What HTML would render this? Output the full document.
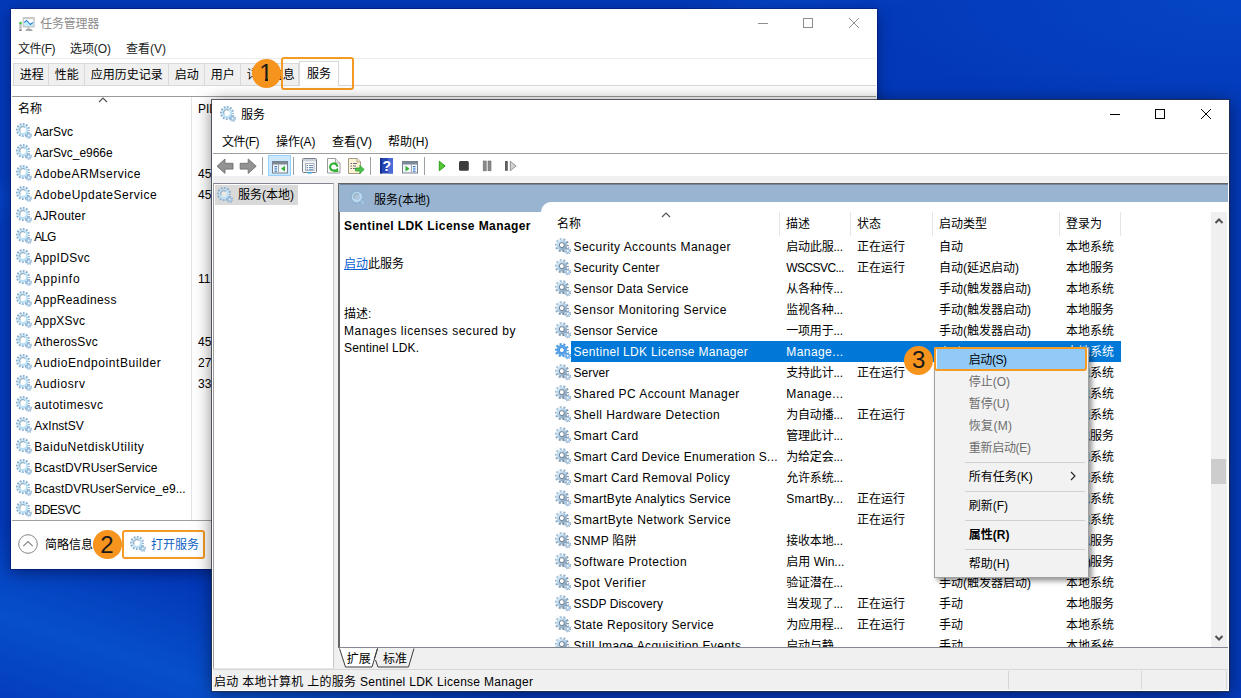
<!DOCTYPE html><html lang="zh-CN"><head><meta charset="utf-8"><title>服务</title><style>
html,body{margin:0;padding:0}
body{width:1241px;height:698px;overflow:hidden;position:relative;font:12px/21px "Liberation Sans","Noto Sans CJK SC",sans-serif;color:#000;background:#0339b9;}
.a{position:absolute}.t{position:absolute;white-space:pre;height:21px;line-height:21px}
.bg{position:absolute;left:0;top:0;width:1241px;height:698px;background:linear-gradient(198.7deg,rgba(8,88,210,0) 84%,rgba(8,88,210,.7) 92.5%,rgba(6,70,200,.3) 100%),radial-gradient(ellipse 380px 120px at 1241px 0px,rgba(8,84,212,.45),rgba(8,84,212,0)),linear-gradient(166deg,rgba(8,84,212,0) 17.5%,rgba(8,84,212,.28) 19.5%,rgba(8,84,212,0) 23%),#0339b9}
</style></head><body><div class="bg"></div>
<svg class="a" width="0" height="0" style="left:0;top:0"><defs><linearGradient id="gg" x1="0" y1="0" x2="1" y2="1"><stop offset="0" stop-color="#dbf1fc"/><stop offset=".45" stop-color="#b4d2e8"/><stop offset="1" stop-color="#748ba1"/></linearGradient><linearGradient id="gt" x1="0" y1="0" x2="1" y2="1"><stop offset="0" stop-color="#b4cee2"/><stop offset=".5" stop-color="#8ea9c1"/><stop offset="1" stop-color="#667b91"/></linearGradient></defs></svg>
<div class="a" style="left:11px;top:9px;width:866px;height:560px;background:#fff;box-shadow:0 0 0 1px rgba(0,20,90,.45),0 4px 14px rgba(0,0,40,.45)"></div>
<svg class="a" style="left:14px;top:12px" width="24" height="22" viewBox="14 12 24 22"><rect x="19.200" y="21.500" width="2.500" height="9.400" rx=".8" fill="#c4c4c4"/><rect x="19.200" y="29.800" width="2.500" height="1.100" fill="#7a7a7a"/><rect x="19.400" y="22.300" width="2.100" height="1.900" rx=".6" fill="#1fd11f"/><rect x="22.600" y="17.100" width="12.200" height="10.400" rx=".8" fill="#c9c9c9"/><rect x="23.900" y="19.100" width="9.300" height="6.800" fill="#fff"/><path d="M23.900 22.500l2.700-2.100 3.800 4.100 2.800-2.300v3.700h-9.300z" fill="#c5ecfb"/><path d="M24.100 22.400l2.500-2 3.800 4.100 2.500-2.200" fill="none" stroke="#1a80d2" stroke-width="1.100"/><rect x="27.600" y="27.500" width="2" height="1.600" fill="#b0b0b0"/><path d="M25.200 30.900l1.300-1.900h5l1.300 1.900z" fill="#a8a8a8"/></svg>
<span class="t" style="left:40.3px;top:14px;color:#8c8c8c;letter-spacing:-0.254px;">任务管理器</span>
<svg class="a" style="left:750px;top:10px" width="126" height="28" viewBox="0 0 126 28" fill="none" stroke="#8e8e8e" stroke-width="1"><path d="M8 13.5h10"/><rect x="53.5" y="8.5" width="9" height="9"/><path d="M99 8l10 10M109 8l-10 10"/></svg>
<span class="t" style="left:18px;top:39px;color:#222;letter-spacing:-0.457px;">文件(F)</span>
<span class="t" style="left:70px;top:39px;color:#222;letter-spacing:-0.082px;">选项(O)</span>
<span class="t" style="left:126px;top:39px;color:#222;">查看(V)</span>
<div class="a" style="left:12px;top:57.6px;width:864px;height:1px;background:#ececec"></div>
<div class="a" style="left:12px;top:85px;width:864px;height:1px;background:#d9d9d9"></div>
<div class="a" style="left:13px;top:63px;width:36px;height:22px;background:#f0f0f0;border:1px solid #d9d9d9;border-bottom:none;box-sizing:border-box"></div>
<span class="t" style="left:19.8px;top:65px;">进程</span>
<div class="a" style="left:48px;top:63px;width:37px;height:22px;background:#f0f0f0;border:1px solid #d9d9d9;border-bottom:none;box-sizing:border-box"></div>
<span class="t" style="left:54.8px;top:65px;">性能</span>
<div class="a" style="left:84px;top:63px;width:85px;height:22px;background:#f0f0f0;border:1px solid #d9d9d9;border-bottom:none;box-sizing:border-box"></div>
<span class="t" style="left:90.8px;top:65px;">应用历史记录</span>
<div class="a" style="left:168px;top:63px;width:37px;height:22px;background:#f0f0f0;border:1px solid #d9d9d9;border-bottom:none;box-sizing:border-box"></div>
<span class="t" style="left:174.8px;top:65px;">启动</span>
<div class="a" style="left:204px;top:63px;width:37px;height:22px;background:#f0f0f0;border:1px solid #d9d9d9;border-bottom:none;box-sizing:border-box"></div>
<span class="t" style="left:210.8px;top:65px;">用户</span>
<div class="a" style="left:240px;top:63px;width:59px;height:22px;background:#f0f0f0;border:1px solid #d9d9d9;border-bottom:none;box-sizing:border-box"></div>
<span class="t" style="left:246.8px;top:65px;">详细信息</span>
<div class="a" style="left:299px;top:61px;width:40px;height:25px;background:#fff;border:1px solid #d9d9d9;border-bottom:none;box-sizing:border-box"></div>
<span class="t" style="left:307px;top:64px;">服务</span>
<div class="a" style="left:12px;top:96px;width:864px;height:1px;background:#9a9a9a"></div>
<div class="a" style="left:191px;top:97px;width:1px;height:423px;background:#e5e5e5"></div>
<span class="t" style="left:18px;top:99px;">名称</span>
<svg class="a" style="left:98px;top:96.5px" width="10" height="6" viewBox="0 0 10 6"><path d="M1 5l4-4 4 4" fill="none" stroke="#555" stroke-width="1.200"/></svg>
<span class="t" style="left:198px;top:99px;">PID</span>
<svg class="a" style="left:16px;top:123px" width="16" height="16" viewBox="0 0 16 16"><circle cx="7" cy="7" r="5.9" fill="none" stroke="#8aadcf" stroke-width="2.2" stroke-dasharray="1.75 1.339" stroke-dashoffset=".875"/><circle cx="7" cy="7" r="4.1" fill="#fff" stroke="#bde1f4" stroke-width="2.3"/><path d="M4.3 8.300a3 3 0 0 1 4.500-3.900" fill="none" stroke="#6b7680" stroke-opacity=".8" stroke-width=".8"/><circle cx="12.700" cy="12.500" r="2.600" fill="none" stroke="#86abcf" stroke-width="1.500" stroke-dasharray="1.050 .992"/><circle cx="12.700" cy="12.500" r="1.600" fill="#fff" stroke="#9dc2e2" stroke-width="1.400"/></svg>
<span class="t" style="left:34.3px;top:122px;letter-spacing:-0.017px;">AarSvc</span>
<svg class="a" style="left:16px;top:144px" width="16" height="16" viewBox="0 0 16 16"><circle cx="7" cy="7" r="5.9" fill="none" stroke="#8aadcf" stroke-width="2.2" stroke-dasharray="1.75 1.339" stroke-dashoffset=".875"/><circle cx="7" cy="7" r="4.1" fill="#fff" stroke="#bde1f4" stroke-width="2.3"/><path d="M4.3 8.300a3 3 0 0 1 4.500-3.900" fill="none" stroke="#6b7680" stroke-opacity=".8" stroke-width=".8"/><circle cx="12.700" cy="12.500" r="2.600" fill="none" stroke="#86abcf" stroke-width="1.500" stroke-dasharray="1.050 .992"/><circle cx="12.700" cy="12.500" r="1.600" fill="#fff" stroke="#9dc2e2" stroke-width="1.400"/></svg>
<span class="t" style="left:34.3px;top:143px;letter-spacing:-0.030px;">AarSvc_e966e</span>
<svg class="a" style="left:16px;top:165px" width="16" height="16" viewBox="0 0 16 16"><circle cx="7" cy="7" r="5.9" fill="none" stroke="#8aadcf" stroke-width="2.2" stroke-dasharray="1.75 1.339" stroke-dashoffset=".875"/><circle cx="7" cy="7" r="4.1" fill="#fff" stroke="#bde1f4" stroke-width="2.3"/><path d="M4.3 8.300a3 3 0 0 1 4.500-3.900" fill="none" stroke="#6b7680" stroke-opacity=".8" stroke-width=".8"/><circle cx="12.700" cy="12.500" r="2.600" fill="none" stroke="#86abcf" stroke-width="1.500" stroke-dasharray="1.050 .992"/><circle cx="12.700" cy="12.500" r="1.600" fill="#fff" stroke="#9dc2e2" stroke-width="1.400"/></svg>
<span class="t" style="left:34.3px;top:164px;letter-spacing:0.488px;">AdobeARMservice</span>
<span class="t" style="left:198px;top:164px;">45</span>
<svg class="a" style="left:16px;top:186px" width="16" height="16" viewBox="0 0 16 16"><circle cx="7" cy="7" r="5.9" fill="none" stroke="#8aadcf" stroke-width="2.2" stroke-dasharray="1.75 1.339" stroke-dashoffset=".875"/><circle cx="7" cy="7" r="4.1" fill="#fff" stroke="#bde1f4" stroke-width="2.3"/><path d="M4.3 8.300a3 3 0 0 1 4.500-3.900" fill="none" stroke="#6b7680" stroke-opacity=".8" stroke-width=".8"/><circle cx="12.700" cy="12.500" r="2.600" fill="none" stroke="#86abcf" stroke-width="1.500" stroke-dasharray="1.050 .992"/><circle cx="12.700" cy="12.500" r="1.600" fill="#fff" stroke="#9dc2e2" stroke-width="1.400"/></svg>
<span class="t" style="left:34.3px;top:185px;letter-spacing:0.528px;">AdobeUpdateService</span>
<span class="t" style="left:198px;top:185px;">45</span>
<svg class="a" style="left:16px;top:207px" width="16" height="16" viewBox="0 0 16 16"><circle cx="7" cy="7" r="5.9" fill="none" stroke="#8aadcf" stroke-width="2.2" stroke-dasharray="1.75 1.339" stroke-dashoffset=".875"/><circle cx="7" cy="7" r="4.1" fill="#fff" stroke="#bde1f4" stroke-width="2.3"/><path d="M4.3 8.300a3 3 0 0 1 4.500-3.900" fill="none" stroke="#6b7680" stroke-opacity=".8" stroke-width=".8"/><circle cx="12.700" cy="12.500" r="2.600" fill="none" stroke="#86abcf" stroke-width="1.500" stroke-dasharray="1.050 .992"/><circle cx="12.700" cy="12.500" r="1.600" fill="#fff" stroke="#9dc2e2" stroke-width="1.400"/></svg>
<span class="t" style="left:34.3px;top:206px;letter-spacing:0.153px;">AJRouter</span>
<svg class="a" style="left:16px;top:228px" width="16" height="16" viewBox="0 0 16 16"><circle cx="7" cy="7" r="5.9" fill="none" stroke="#8aadcf" stroke-width="2.2" stroke-dasharray="1.75 1.339" stroke-dashoffset=".875"/><circle cx="7" cy="7" r="4.1" fill="#fff" stroke="#bde1f4" stroke-width="2.3"/><path d="M4.3 8.300a3 3 0 0 1 4.500-3.900" fill="none" stroke="#6b7680" stroke-opacity=".8" stroke-width=".8"/><circle cx="12.700" cy="12.500" r="2.600" fill="none" stroke="#86abcf" stroke-width="1.500" stroke-dasharray="1.050 .992"/><circle cx="12.700" cy="12.500" r="1.600" fill="#fff" stroke="#9dc2e2" stroke-width="1.400"/></svg>
<span class="t" style="left:34.3px;top:227px;letter-spacing:-1.008px;">ALG</span>
<svg class="a" style="left:16px;top:249px" width="16" height="16" viewBox="0 0 16 16"><circle cx="7" cy="7" r="5.9" fill="none" stroke="#8aadcf" stroke-width="2.2" stroke-dasharray="1.75 1.339" stroke-dashoffset=".875"/><circle cx="7" cy="7" r="4.1" fill="#fff" stroke="#bde1f4" stroke-width="2.3"/><path d="M4.3 8.300a3 3 0 0 1 4.500-3.900" fill="none" stroke="#6b7680" stroke-opacity=".8" stroke-width=".8"/><circle cx="12.700" cy="12.500" r="2.600" fill="none" stroke="#86abcf" stroke-width="1.500" stroke-dasharray="1.050 .992"/><circle cx="12.700" cy="12.500" r="1.600" fill="#fff" stroke="#9dc2e2" stroke-width="1.400"/></svg>
<span class="t" style="left:34.3px;top:248px;letter-spacing:0.306px;">AppIDSvc</span>
<svg class="a" style="left:16px;top:270px" width="16" height="16" viewBox="0 0 16 16"><circle cx="7" cy="7" r="5.9" fill="none" stroke="#8aadcf" stroke-width="2.2" stroke-dasharray="1.75 1.339" stroke-dashoffset=".875"/><circle cx="7" cy="7" r="4.1" fill="#fff" stroke="#bde1f4" stroke-width="2.3"/><path d="M4.3 8.300a3 3 0 0 1 4.500-3.900" fill="none" stroke="#6b7680" stroke-opacity=".8" stroke-width=".8"/><circle cx="12.700" cy="12.500" r="2.600" fill="none" stroke="#86abcf" stroke-width="1.500" stroke-dasharray="1.050 .992"/><circle cx="12.700" cy="12.500" r="1.600" fill="#fff" stroke="#9dc2e2" stroke-width="1.400"/></svg>
<span class="t" style="left:34.3px;top:269px;letter-spacing:0.766px;">Appinfo</span>
<span class="t" style="left:198px;top:269px;">11</span>
<svg class="a" style="left:16px;top:291px" width="16" height="16" viewBox="0 0 16 16"><circle cx="7" cy="7" r="5.9" fill="none" stroke="#8aadcf" stroke-width="2.2" stroke-dasharray="1.75 1.339" stroke-dashoffset=".875"/><circle cx="7" cy="7" r="4.1" fill="#fff" stroke="#bde1f4" stroke-width="2.3"/><path d="M4.3 8.300a3 3 0 0 1 4.500-3.900" fill="none" stroke="#6b7680" stroke-opacity=".8" stroke-width=".8"/><circle cx="12.700" cy="12.500" r="2.600" fill="none" stroke="#86abcf" stroke-width="1.500" stroke-dasharray="1.050 .992"/><circle cx="12.700" cy="12.500" r="1.600" fill="#fff" stroke="#9dc2e2" stroke-width="1.400"/></svg>
<span class="t" style="left:34.3px;top:290px;letter-spacing:0.376px;">AppReadiness</span>
<svg class="a" style="left:16px;top:312px" width="16" height="16" viewBox="0 0 16 16"><circle cx="7" cy="7" r="5.9" fill="none" stroke="#8aadcf" stroke-width="2.2" stroke-dasharray="1.75 1.339" stroke-dashoffset=".875"/><circle cx="7" cy="7" r="4.1" fill="#fff" stroke="#bde1f4" stroke-width="2.3"/><path d="M4.3 8.300a3 3 0 0 1 4.500-3.900" fill="none" stroke="#6b7680" stroke-opacity=".8" stroke-width=".8"/><circle cx="12.700" cy="12.500" r="2.600" fill="none" stroke="#86abcf" stroke-width="1.500" stroke-dasharray="1.050 .992"/><circle cx="12.700" cy="12.500" r="1.600" fill="#fff" stroke="#9dc2e2" stroke-width="1.400"/></svg>
<span class="t" style="left:34.3px;top:311px;letter-spacing:0.207px;">AppXSvc</span>
<svg class="a" style="left:16px;top:333px" width="16" height="16" viewBox="0 0 16 16"><circle cx="7" cy="7" r="5.9" fill="none" stroke="#8aadcf" stroke-width="2.2" stroke-dasharray="1.75 1.339" stroke-dashoffset=".875"/><circle cx="7" cy="7" r="4.1" fill="#fff" stroke="#bde1f4" stroke-width="2.3"/><path d="M4.3 8.300a3 3 0 0 1 4.500-3.900" fill="none" stroke="#6b7680" stroke-opacity=".8" stroke-width=".8"/><circle cx="12.700" cy="12.500" r="2.600" fill="none" stroke="#86abcf" stroke-width="1.500" stroke-dasharray="1.050 .992"/><circle cx="12.700" cy="12.500" r="1.600" fill="#fff" stroke="#9dc2e2" stroke-width="1.400"/></svg>
<span class="t" style="left:34.3px;top:332px;letter-spacing:0.238px;">AtherosSvc</span>
<span class="t" style="left:198px;top:332px;">45</span>
<svg class="a" style="left:16px;top:354px" width="16" height="16" viewBox="0 0 16 16"><circle cx="7" cy="7" r="5.9" fill="none" stroke="#8aadcf" stroke-width="2.2" stroke-dasharray="1.75 1.339" stroke-dashoffset=".875"/><circle cx="7" cy="7" r="4.1" fill="#fff" stroke="#bde1f4" stroke-width="2.3"/><path d="M4.3 8.300a3 3 0 0 1 4.500-3.900" fill="none" stroke="#6b7680" stroke-opacity=".8" stroke-width=".8"/><circle cx="12.700" cy="12.500" r="2.600" fill="none" stroke="#86abcf" stroke-width="1.500" stroke-dasharray="1.050 .992"/><circle cx="12.700" cy="12.500" r="1.600" fill="#fff" stroke="#9dc2e2" stroke-width="1.400"/></svg>
<span class="t" style="left:34.3px;top:353px;letter-spacing:0.578px;">AudioEndpointBuilder</span>
<span class="t" style="left:198px;top:353px;">27</span>
<svg class="a" style="left:16px;top:375px" width="16" height="16" viewBox="0 0 16 16"><circle cx="7" cy="7" r="5.9" fill="none" stroke="#8aadcf" stroke-width="2.2" stroke-dasharray="1.75 1.339" stroke-dashoffset=".875"/><circle cx="7" cy="7" r="4.1" fill="#fff" stroke="#bde1f4" stroke-width="2.3"/><path d="M4.3 8.300a3 3 0 0 1 4.500-3.900" fill="none" stroke="#6b7680" stroke-opacity=".8" stroke-width=".8"/><circle cx="12.700" cy="12.500" r="2.600" fill="none" stroke="#86abcf" stroke-width="1.500" stroke-dasharray="1.050 .992"/><circle cx="12.700" cy="12.500" r="1.600" fill="#fff" stroke="#9dc2e2" stroke-width="1.400"/></svg>
<span class="t" style="left:34.3px;top:374px;letter-spacing:0.559px;">Audiosrv</span>
<span class="t" style="left:198px;top:374px;">33</span>
<svg class="a" style="left:16px;top:396px" width="16" height="16" viewBox="0 0 16 16"><circle cx="7" cy="7" r="5.9" fill="none" stroke="#8aadcf" stroke-width="2.2" stroke-dasharray="1.75 1.339" stroke-dashoffset=".875"/><circle cx="7" cy="7" r="4.1" fill="#fff" stroke="#bde1f4" stroke-width="2.3"/><path d="M4.3 8.300a3 3 0 0 1 4.500-3.900" fill="none" stroke="#6b7680" stroke-opacity=".8" stroke-width=".8"/><circle cx="12.700" cy="12.500" r="2.600" fill="none" stroke="#86abcf" stroke-width="1.500" stroke-dasharray="1.050 .992"/><circle cx="12.700" cy="12.500" r="1.600" fill="#fff" stroke="#9dc2e2" stroke-width="1.400"/></svg>
<span class="t" style="left:34.3px;top:395px;letter-spacing:0.467px;">autotimesvc</span>
<svg class="a" style="left:16px;top:417px" width="16" height="16" viewBox="0 0 16 16"><circle cx="7" cy="7" r="5.9" fill="none" stroke="#8aadcf" stroke-width="2.2" stroke-dasharray="1.75 1.339" stroke-dashoffset=".875"/><circle cx="7" cy="7" r="4.1" fill="#fff" stroke="#bde1f4" stroke-width="2.3"/><path d="M4.3 8.300a3 3 0 0 1 4.500-3.900" fill="none" stroke="#6b7680" stroke-opacity=".8" stroke-width=".8"/><circle cx="12.700" cy="12.500" r="2.600" fill="none" stroke="#86abcf" stroke-width="1.500" stroke-dasharray="1.050 .992"/><circle cx="12.700" cy="12.500" r="1.600" fill="#fff" stroke="#9dc2e2" stroke-width="1.400"/></svg>
<span class="t" style="left:34.3px;top:416px;">AxInstSV</span>
<svg class="a" style="left:16px;top:438px" width="16" height="16" viewBox="0 0 16 16"><circle cx="7" cy="7" r="5.9" fill="none" stroke="#8aadcf" stroke-width="2.2" stroke-dasharray="1.75 1.339" stroke-dashoffset=".875"/><circle cx="7" cy="7" r="4.1" fill="#fff" stroke="#bde1f4" stroke-width="2.3"/><path d="M4.3 8.300a3 3 0 0 1 4.500-3.900" fill="none" stroke="#6b7680" stroke-opacity=".8" stroke-width=".8"/><circle cx="12.700" cy="12.500" r="2.600" fill="none" stroke="#86abcf" stroke-width="1.500" stroke-dasharray="1.050 .992"/><circle cx="12.700" cy="12.500" r="1.600" fill="#fff" stroke="#9dc2e2" stroke-width="1.400"/></svg>
<span class="t" style="left:34.3px;top:437px;letter-spacing:0.525px;">BaiduNetdiskUtility</span>
<svg class="a" style="left:16px;top:459px" width="16" height="16" viewBox="0 0 16 16"><circle cx="7" cy="7" r="5.9" fill="none" stroke="#8aadcf" stroke-width="2.2" stroke-dasharray="1.75 1.339" stroke-dashoffset=".875"/><circle cx="7" cy="7" r="4.1" fill="#fff" stroke="#bde1f4" stroke-width="2.3"/><path d="M4.3 8.300a3 3 0 0 1 4.500-3.900" fill="none" stroke="#6b7680" stroke-opacity=".8" stroke-width=".8"/><circle cx="12.700" cy="12.500" r="2.600" fill="none" stroke="#86abcf" stroke-width="1.500" stroke-dasharray="1.050 .992"/><circle cx="12.700" cy="12.500" r="1.600" fill="#fff" stroke="#9dc2e2" stroke-width="1.400"/></svg>
<span class="t" style="left:34.3px;top:458px;letter-spacing:0.139px;">BcastDVRUserService</span>
<svg class="a" style="left:16px;top:480px" width="16" height="16" viewBox="0 0 16 16"><circle cx="7" cy="7" r="5.9" fill="none" stroke="#8aadcf" stroke-width="2.2" stroke-dasharray="1.75 1.339" stroke-dashoffset=".875"/><circle cx="7" cy="7" r="4.1" fill="#fff" stroke="#bde1f4" stroke-width="2.3"/><path d="M4.3 8.300a3 3 0 0 1 4.500-3.900" fill="none" stroke="#6b7680" stroke-opacity=".8" stroke-width=".8"/><circle cx="12.700" cy="12.500" r="2.600" fill="none" stroke="#86abcf" stroke-width="1.500" stroke-dasharray="1.050 .992"/><circle cx="12.700" cy="12.500" r="1.600" fill="#fff" stroke="#9dc2e2" stroke-width="1.400"/></svg>
<span class="t" style="left:34.3px;top:479px;letter-spacing:0.028px;">BcastDVRUserService_e9...</span>
<svg class="a" style="left:16px;top:501px" width="16" height="16" viewBox="0 0 16 16"><circle cx="7" cy="7" r="5.9" fill="none" stroke="#8aadcf" stroke-width="2.2" stroke-dasharray="1.75 1.339" stroke-dashoffset=".875"/><circle cx="7" cy="7" r="4.1" fill="#fff" stroke="#bde1f4" stroke-width="2.3"/><path d="M4.3 8.300a3 3 0 0 1 4.500-3.900" fill="none" stroke="#6b7680" stroke-opacity=".8" stroke-width=".8"/><circle cx="12.700" cy="12.500" r="2.600" fill="none" stroke="#86abcf" stroke-width="1.500" stroke-dasharray="1.050 .992"/><circle cx="12.700" cy="12.500" r="1.600" fill="#fff" stroke="#9dc2e2" stroke-width="1.400"/></svg>
<span class="t" style="left:34.3px;top:500px;letter-spacing:-0.552px;">BDESVC</span>
<div class="a" style="left:12px;top:520px;width:864px;height:1px;background:#a0a0a0"></div>
<svg class="a" style="left:17.300px;top:533px" width="22" height="22" viewBox="0 0 22 22" fill="none" stroke="#858585" stroke-width="1"><circle cx="11" cy="11" r="9.300"/><path d="M6.300 13.200l4.700-4.700 4.700 4.700" stroke-width="1.200"/></svg>
<span class="t" style="left:45px;top:535px;color:#000;">简略信息(D)</span>
<svg class="a" style="left:130px;top:536px" width="16" height="16" viewBox="0 0 16 16"><circle cx="7" cy="7" r="5.9" fill="none" stroke="#8aadcf" stroke-width="2.2" stroke-dasharray="1.75 1.339" stroke-dashoffset=".875"/><circle cx="7" cy="7" r="4.1" fill="#fff" stroke="#bde1f4" stroke-width="2.3"/><path d="M4.3 8.300a3 3 0 0 1 4.500-3.900" fill="none" stroke="#6b7680" stroke-opacity=".8" stroke-width=".8"/><circle cx="12.700" cy="12.500" r="2.600" fill="none" stroke="#86abcf" stroke-width="1.500" stroke-dasharray="1.050 .992"/><circle cx="12.700" cy="12.500" r="1.600" fill="#fff" stroke="#9dc2e2" stroke-width="1.400"/></svg>
<span class="t" style="left:151px;top:535px;color:#0f5fc4;">打开服务</span>
<div class="a" style="left:281px;top:57.2px;width:72.5px;height:32.4px;border:2px solid #f59a23;border-radius:3px;box-sizing:border-box"></div>
<div class="a" style="left:251.5px;top:58.5px;width:29px;height:29px;border-radius:50%;background:#f7941d"></div>
<span class="t" style="left:259.33px;top:59px;height:28px;line-height:28px;font-size:24px;color:#1a1a1a;">1</span>
<div class="a" style="left:260px;top:78.4px;width:4.9px;height:3.2px;background:#f7941d"></div>
<div class="a" style="left:268.1px;top:78.4px;width:4.9px;height:3.2px;background:#f7941d"></div>
<div class="a" style="left:122px;top:530px;width:83px;height:29px;border:2px solid #f59a23;border-radius:3px;box-sizing:border-box"></div>
<div class="a" style="left:92.5px;top:530px;width:29px;height:29px;border-radius:50%;background:#f7941d"></div>
<span class="t" style="left:100.33px;top:531px;height:28px;line-height:28px;font-size:24px;color:#1a1a1a;">2</span>
<div class="a" style="left:212px;top:100px;width:1017px;height:591px;background:#fff;box-shadow:0 0 0 1px rgba(40,45,60,.75),0 2px 16px rgba(0,0,0,.5)"></div>
<svg class="a" style="left:220px;top:106px" width="16" height="16" viewBox="0 0 16 16"><circle cx="7" cy="7" r="5.9" fill="none" stroke="#8aadcf" stroke-width="2.2" stroke-dasharray="1.75 1.339" stroke-dashoffset=".875"/><circle cx="7" cy="7" r="4.1" fill="#fff" stroke="#bde1f4" stroke-width="2.3"/><path d="M4.3 8.300a3 3 0 0 1 4.500-3.900" fill="none" stroke="#6b7680" stroke-opacity=".8" stroke-width=".8"/><circle cx="12.700" cy="12.500" r="2.600" fill="none" stroke="#86abcf" stroke-width="1.500" stroke-dasharray="1.050 .992"/><circle cx="12.700" cy="12.500" r="1.600" fill="#fff" stroke="#9dc2e2" stroke-width="1.400"/></svg>
<span class="t" style="left:241px;top:105px;">服务</span>
<svg class="a" style="left:1100px;top:101px" width="128" height="28" viewBox="0 0 128 28" fill="none" stroke="#000" stroke-width="1"><path d="M10 13.5h10"/><rect x="55.5" y="8.5" width="9" height="9"/><path d="M101 8l10 10M111 8l-10 10"/></svg>
<span class="t" style="left:222px;top:132px;letter-spacing:-0.457px;">文件(F)</span>
<span class="t" style="left:276px;top:132px;letter-spacing:-0.125px;">操作(A)</span>
<span class="t" style="left:332px;top:132px;">查看(V)</span>
<span class="t" style="left:388px;top:132px;letter-spacing:-0.043px;">帮助(H)</span>
<div class="a" style="left:213px;top:153px;width:1015px;height:1px;background:#a0a0a0"></div>
<div class="a" style="left:213px;top:176px;width:1015px;height:7px;background:#f0f0f0"></div>
<div class="a" style="left:268px;top:155px;width:23px;height:21px;background:#cce8ff;border:1px solid #99d1ff;box-sizing:border-box"></div>
<div class="a" style="left:262px;top:157px;width:1px;height:18px;background:#a0a0a0"></div>
<div class="a" style="left:293px;top:157px;width:1px;height:18px;background:#a0a0a0"></div>
<div class="a" style="left:370px;top:157px;width:1px;height:18px;background:#a0a0a0"></div>
<div class="a" style="left:424px;top:157px;width:1px;height:18px;background:#a0a0a0"></div>
<svg class="a" style="left:213px;top:154px" width="320" height="23" viewBox="213 154 320 23"><path d="M217 166.200l8-7.200v4.300h8v5.800h-8v4.300z" fill="#939393" stroke="#6f6f6f" stroke-width=".9" stroke-linejoin="round"/><path d="M256.200 166.200l-8-7.200v4.300h-8v5.800h8v4.300z" fill="#939393" stroke="#6f6f6f" stroke-width=".9" stroke-linejoin="round"/><rect x="272.500" y="161.500" width="15" height="11.500" fill="#f4f7fa" stroke="#76828f"/><rect x="273" y="162" width="14" height="2.500" fill="#7c8896"/><path d="M278.500 164.500v8" stroke="#9aa5b1"/><rect x="274.500" y="166" width="2.500" height="1.300" fill="#3f7fd0"/><rect x="274.500" y="168.300" width="2.500" height="1.300" fill="#3f7fd0"/><rect x="274.500" y="170.600" width="2.500" height="1.300" fill="#3f7fd0"/><path d="M285 165.800v5.800l-4-2.900z" fill="#35b035"/><rect x="302.500" y="158.500" width="14" height="14" rx="1" fill="#f4f7fa" stroke="#767d86"/><rect x="303" y="159" width="13" height="2.300" fill="#c9d0d8"/><rect x="305.500" y="163.500" width="8.500" height="7" fill="#fff" stroke="#9aa3ad" stroke-width=".8"/><path d="M306.500 165.500h1.500M309 165.500h4M306.500 167.500h1.500M309 167.500h4M306.500 169.300h1.500M309 169.300h4" stroke="#5d7fae" stroke-width=".9"/><rect x="307.500" y="172" width="4" height="1.500" fill="#2fa8e8"/><path d="M327.500 158.500h8l4.500 4.500v10h-12.500z" fill="#fff" stroke="#9a9a9a"/><path d="M335.500 158.500v4.500h4.500" fill="#e8e8e8" stroke="#9a9a9a" stroke-width=".8"/><path d="M337.300 166.800a3.600 3.600 0 1 0-1.500 3.100" fill="none" stroke="#2fae2f" stroke-width="2.100"/><path d="M334 172.300l4.600-.5-1.100-4.300z" fill="#2fae2f"/><path d="M348.500 158.500h8.500l3.500 3.500v11.500h-12z" fill="#fbf3d3" stroke="#a39b86"/><path d="M357 158.500v3.500h3.500" fill="#efe6c2" stroke="#a39b86" stroke-width=".8"/><path d="M350.500 163.500h1.500M353 163.500h4M350.500 166h1.500M353 166h3M350.500 168.500h1.500M353 168.500h3" stroke="#6f6a8a" stroke-width="1"/><path d="M355.500 168h4.300v-2.600l4.400 4.100-4.400 4.100v-2.600h-4.300z" fill="#4bc24b" stroke="#2c982c" stroke-width=".7"/><rect x="380" y="158" width="13" height="15.500" fill="#2646b4"/><rect x="388" y="158" width="5" height="15.500" fill="#4a6ad8"/><rect x="380" y="158" width="2" height="15.500" fill="#17308f"/><rect x="402.500" y="161.500" width="15" height="11.500" fill="#f4f7fa" stroke="#76828f"/><rect x="403" y="162" width="14" height="2.500" fill="#7c8896"/><path d="M411.500 164.500v8" stroke="#9aa5b1"/><path d="M405.500 165.800v5.800l4-2.900z" fill="#35b035"/><rect x="413" y="166" width="2.500" height="1.300" fill="#3f7fd0"/><rect x="413" y="168.300" width="2.500" height="1.300" fill="#3f7fd0"/><rect x="413" y="170.600" width="2.500" height="1.300" fill="#3f7fd0"/><path d="M439.300 161.200l5.800 4.800-5.800 4.800z" fill="#55c833" stroke="#2e9e1a" stroke-width="1"/><rect x="459" y="161" width="9.800" height="9.800" rx="1.500" fill="#3c3c3c"/><rect x="483.200" y="161" width="3" height="9.800" fill="#8a8a8a" stroke="#6a6a6a" stroke-width=".6"/><rect x="488" y="161" width="3" height="9.800" fill="#8a8a8a" stroke="#6a6a6a" stroke-width=".6"/><rect x="505" y="161" width="2.800" height="9.800" fill="#5f5f5f"/><path d="M510.300 161.300l5.800 4.700-5.800 4.700z" fill="#d2d2d2" stroke="#8a8a8a" stroke-width=".9"/><text x="382.600" y="171" font-family='"Liberation Sans",sans-serif' font-size="14" font-weight="bold" fill="#fff">?</text></svg>
<div class="a" style="left:213px;top:183px;width:1015px;height:486px;background:#f0f0f0"></div>
<div class="a" style="left:213px;top:183px;width:121px;height:486px;background:#fff;border:1px solid #828790;border-right-color:#c8c8c8;border-bottom-color:#e8e8e8;border-left-color:#a0a0a0;box-sizing:border-box"></div>
<div class="a" style="left:215px;top:185px;width:83px;height:20px;background:#d9d9d9"></div>
<svg class="a" style="left:217px;top:187px" width="16" height="16" viewBox="0 0 16 16"><circle cx="7" cy="7" r="5.9" fill="none" stroke="#8aadcf" stroke-width="2.2" stroke-dasharray="1.75 1.339" stroke-dashoffset=".875"/><circle cx="7" cy="7" r="4.1" fill="#e9e9e9" stroke="#bde1f4" stroke-width="2.3"/><path d="M4.3 8.300a3 3 0 0 1 4.500-3.900" fill="none" stroke="#6b7680" stroke-opacity=".8" stroke-width=".8"/><circle cx="12.700" cy="12.500" r="2.600" fill="none" stroke="#86abcf" stroke-width="1.500" stroke-dasharray="1.050 .992"/><circle cx="12.700" cy="12.500" r="1.600" fill="#e9e9e9" stroke="#9dc2e2" stroke-width="1.400"/></svg>
<span class="t" style="left:238px;top:185px;">服务(本地)</span>
<div class="a" style="left:337.5px;top:183px;width:890.5px;height:465px;background:#fff;border:1px solid #646464;border-left-width:2px;border-right:none;box-sizing:border-box"></div>
<div class="a" style="left:339px;top:184px;width:889px;height:28px;background:#99b4d1"></div>
<div class="a" style="left:541px;top:202px;width:687px;height:20px;background:#fff;border-top-left-radius:10px"></div>
<svg class="a" style="left:350px;top:190px;opacity:.85" width="16" height="16" viewBox="0 0 16 16"><circle cx="7" cy="7" r="5.9" fill="none" stroke="#8aadcf" stroke-width="2.2" stroke-dasharray="1.75 1.339" stroke-dashoffset=".875"/><circle cx="7" cy="7" r="4.1" fill="#b3c8df" stroke="#bde1f4" stroke-width="2.3"/><path d="M4.3 8.300a3 3 0 0 1 4.500-3.900" fill="none" stroke="#6b7680" stroke-opacity=".8" stroke-width=".8"/><circle cx="12.700" cy="12.500" r="2.600" fill="none" stroke="#86abcf" stroke-width="1.500" stroke-dasharray="1.050 .992"/><circle cx="12.700" cy="12.500" r="1.600" fill="#b3c8df" stroke="#9dc2e2" stroke-width="1.400"/></svg>
<div class="a" style="left:339.5px;top:184px;width:888.5px;height:1px;background:#77869b"></div>
<span class="t" style="left:374px;top:190px;">服务(本地)</span>
<span class="t" style="left:344px;top:216px;font-weight:bold;letter-spacing:0.411px;">Sentinel LDK License Manager</span>
<span class="t" style="left:344px;top:254px;color:#0b5fd0;text-decoration:underline;">启动</span>
<span class="t" style="left:368px;top:254px;">此服务</span>
<span class="t" style="left:344px;top:304px;">描述:</span>
<span class="t" style="left:344px;top:321px;letter-spacing:0.516px;">Manages licenses secured by</span>
<span class="t" style="left:344px;top:338px;letter-spacing:0.134px;">Sentinel LDK.</span>
<span class="t" style="left:557px;top:214px;">名称</span>
<span class="t" style="left:786px;top:214px;">描述</span>
<span class="t" style="left:857px;top:214px;">状态</span>
<span class="t" style="left:939px;top:214px;">启动类型</span>
<span class="t" style="left:1066px;top:214px;">登录为</span>
<svg class="a" style="left:660.5px;top:211.5px" width="10" height="6" viewBox="0 0 10 6"><path d="M1 5l4-4 4 4" fill="none" stroke="#555" stroke-width="1.200"/></svg>
<div class="a" style="left:779px;top:212px;width:1px;height:24px;background:#e5e5e5"></div>
<div class="a" style="left:850px;top:212px;width:1px;height:24px;background:#e5e5e5"></div>
<div class="a" style="left:932px;top:212px;width:1px;height:24px;background:#e5e5e5"></div>
<div class="a" style="left:1059px;top:212px;width:1px;height:24px;background:#e5e5e5"></div>
<div class="a" style="left:1120px;top:212px;width:1px;height:24px;background:#e5e5e5"></div>
<div class="a" style="left:339px;top:235px;width:871px;height:412px;overflow:hidden">
<svg class="a" style="left:216px;top:3px" width="17" height="17" viewBox="0 0 17 17"><circle cx="6.800" cy="7.100" r="5.900" fill="none" stroke="url(#gt)" stroke-width="2.300" stroke-dasharray="2.050 1.657" stroke-dashoffset="1.025"/><circle cx="6.800" cy="7.100" r="5.300" fill="url(#gg)"/><circle cx="6.800" cy="7.100" r="2.500" fill="#ffffff" stroke="#5f7388" stroke-width=".9"/><circle cx="12.700" cy="12.800" r="2.700" fill="none" stroke="#7fa1c2" stroke-width="1.500" stroke-dasharray="1.100 1.020"/><circle cx="12.700" cy="12.800" r="2.200" fill="#a3c2dd"/><circle cx="12.700" cy="12.800" r="1" fill="#ffffff"/></svg>
<span class="t" style="left:234.5px;top:2px;letter-spacing:0.459px;">Security Accounts Manager</span>
<span class="t" style="left:447.3px;top:2px;letter-spacing:-0.219px;">启动此服...</span>
<span class="t" style="left:518px;top:2px;">正在运行</span>
<span class="t" style="left:600px;top:2px;">自动</span>
<span class="t" style="left:727px;top:2px;">本地系统</span>
<svg class="a" style="left:216px;top:24px" width="17" height="17" viewBox="0 0 17 17"><circle cx="6.800" cy="7.100" r="5.900" fill="none" stroke="url(#gt)" stroke-width="2.300" stroke-dasharray="2.050 1.657" stroke-dashoffset="1.025"/><circle cx="6.800" cy="7.100" r="5.300" fill="url(#gg)"/><circle cx="6.800" cy="7.100" r="2.500" fill="#ffffff" stroke="#5f7388" stroke-width=".9"/><circle cx="12.700" cy="12.800" r="2.700" fill="none" stroke="#7fa1c2" stroke-width="1.500" stroke-dasharray="1.100 1.020"/><circle cx="12.700" cy="12.800" r="2.200" fill="#a3c2dd"/><circle cx="12.700" cy="12.800" r="1" fill="#ffffff"/></svg>
<span class="t" style="left:234.5px;top:23px;letter-spacing:0.235px;">Security Center</span>
<span class="t" style="left:447.3px;top:23px;letter-spacing:-0.571px;">WSCSVC...</span>
<span class="t" style="left:518px;top:23px;">正在运行</span>
<span class="t" style="left:600px;top:23px;">自动(延迟启动)</span>
<span class="t" style="left:727px;top:23px;">本地服务</span>
<svg class="a" style="left:216px;top:45px" width="17" height="17" viewBox="0 0 17 17"><circle cx="6.800" cy="7.100" r="5.900" fill="none" stroke="url(#gt)" stroke-width="2.300" stroke-dasharray="2.050 1.657" stroke-dashoffset="1.025"/><circle cx="6.800" cy="7.100" r="5.300" fill="url(#gg)"/><circle cx="6.800" cy="7.100" r="2.500" fill="#ffffff" stroke="#5f7388" stroke-width=".9"/><circle cx="12.700" cy="12.800" r="2.700" fill="none" stroke="#7fa1c2" stroke-width="1.500" stroke-dasharray="1.100 1.020"/><circle cx="12.700" cy="12.800" r="2.200" fill="#a3c2dd"/><circle cx="12.700" cy="12.800" r="1" fill="#ffffff"/></svg>
<span class="t" style="left:234.5px;top:44px;letter-spacing:0.274px;">Sensor Data Service</span>
<span class="t" style="left:447.3px;top:44px;letter-spacing:-0.219px;">从各种传...</span>
<span class="t" style="left:600px;top:44px;">手动(触发器启动)</span>
<span class="t" style="left:727px;top:44px;">本地系统</span>
<svg class="a" style="left:216px;top:66px" width="17" height="17" viewBox="0 0 17 17"><circle cx="6.800" cy="7.100" r="5.900" fill="none" stroke="url(#gt)" stroke-width="2.300" stroke-dasharray="2.050 1.657" stroke-dashoffset="1.025"/><circle cx="6.800" cy="7.100" r="5.300" fill="url(#gg)"/><circle cx="6.800" cy="7.100" r="2.500" fill="#ffffff" stroke="#5f7388" stroke-width=".9"/><circle cx="12.700" cy="12.800" r="2.700" fill="none" stroke="#7fa1c2" stroke-width="1.500" stroke-dasharray="1.100 1.020"/><circle cx="12.700" cy="12.800" r="2.200" fill="#a3c2dd"/><circle cx="12.700" cy="12.800" r="1" fill="#ffffff"/></svg>
<span class="t" style="left:234.5px;top:65px;letter-spacing:0.511px;">Sensor Monitoring Service</span>
<span class="t" style="left:447.3px;top:65px;letter-spacing:-0.219px;">监视各种...</span>
<span class="t" style="left:600px;top:65px;">手动(触发器启动)</span>
<span class="t" style="left:727px;top:65px;">本地服务</span>
<svg class="a" style="left:216px;top:87px" width="17" height="17" viewBox="0 0 17 17"><circle cx="6.800" cy="7.100" r="5.900" fill="none" stroke="url(#gt)" stroke-width="2.300" stroke-dasharray="2.050 1.657" stroke-dashoffset="1.025"/><circle cx="6.800" cy="7.100" r="5.300" fill="url(#gg)"/><circle cx="6.800" cy="7.100" r="2.500" fill="#ffffff" stroke="#5f7388" stroke-width=".9"/><circle cx="12.700" cy="12.800" r="2.700" fill="none" stroke="#7fa1c2" stroke-width="1.500" stroke-dasharray="1.100 1.020"/><circle cx="12.700" cy="12.800" r="2.200" fill="#a3c2dd"/><circle cx="12.700" cy="12.800" r="1" fill="#ffffff"/></svg>
<span class="t" style="left:234.5px;top:86px;letter-spacing:0.210px;">Sensor Service</span>
<span class="t" style="left:447.3px;top:86px;letter-spacing:-0.219px;">一项用于...</span>
<span class="t" style="left:600px;top:86px;">手动(触发器启动)</span>
<span class="t" style="left:727px;top:86px;">本地系统</span>
<div class="a" style="left:232px;top:106px;width:550px;height:21px;background:#0078d7"></div>
<svg class="a" style="left:216px;top:108px" width="17" height="17" viewBox="0 0 17 17"><circle cx="6.800" cy="7.100" r="5.900" fill="none" stroke="#4c9be3" stroke-width="2.300" stroke-dasharray="2.050 1.657" stroke-dashoffset="1.025"/><circle cx="6.800" cy="7.100" r="5.300" fill="#5aa3e6"/><circle cx="6.800" cy="7.100" r="2.500" fill="#ffffff" stroke="#2f86dc" stroke-width=".9"/><circle cx="12.700" cy="12.800" r="2.700" fill="none" stroke="#4c9be3" stroke-width="1.500" stroke-dasharray="1.100 1.020"/><circle cx="12.700" cy="12.800" r="2.200" fill="#5aa3e6"/><circle cx="12.700" cy="12.800" r="1" fill="#ffffff"/></svg>
<span class="t" style="left:234.5px;top:107px;color:#fff;letter-spacing:0.325px;">Sentinel LDK License Manager</span>
<span class="t" style="left:447.3px;top:107px;color:#fff;letter-spacing:0.416px;">Manage...</span>
<span class="t" style="left:600px;top:108px;color:#fff;">自动</span>
<span class="t" style="left:727px;top:107px;color:#fff;">本地系统</span>
<svg class="a" style="left:216px;top:129px" width="17" height="17" viewBox="0 0 17 17"><circle cx="6.800" cy="7.100" r="5.900" fill="none" stroke="url(#gt)" stroke-width="2.300" stroke-dasharray="2.050 1.657" stroke-dashoffset="1.025"/><circle cx="6.800" cy="7.100" r="5.300" fill="url(#gg)"/><circle cx="6.800" cy="7.100" r="2.500" fill="#ffffff" stroke="#5f7388" stroke-width=".9"/><circle cx="12.700" cy="12.800" r="2.700" fill="none" stroke="#7fa1c2" stroke-width="1.500" stroke-dasharray="1.100 1.020"/><circle cx="12.700" cy="12.800" r="2.200" fill="#a3c2dd"/><circle cx="12.700" cy="12.800" r="1" fill="#ffffff"/></svg>
<span class="t" style="left:234.5px;top:128px;letter-spacing:0.071px;">Server</span>
<span class="t" style="left:447.3px;top:128px;letter-spacing:-0.219px;">支持此计...</span>
<span class="t" style="left:518px;top:128px;">正在运行</span>
<span class="t" style="left:600px;top:128px;">自动(触发器启动)</span>
<span class="t" style="left:727px;top:128px;">本地系统</span>
<svg class="a" style="left:216px;top:150px" width="17" height="17" viewBox="0 0 17 17"><circle cx="6.800" cy="7.100" r="5.900" fill="none" stroke="url(#gt)" stroke-width="2.300" stroke-dasharray="2.050 1.657" stroke-dashoffset="1.025"/><circle cx="6.800" cy="7.100" r="5.300" fill="url(#gg)"/><circle cx="6.800" cy="7.100" r="2.500" fill="#ffffff" stroke="#5f7388" stroke-width=".9"/><circle cx="12.700" cy="12.800" r="2.700" fill="none" stroke="#7fa1c2" stroke-width="1.500" stroke-dasharray="1.100 1.020"/><circle cx="12.700" cy="12.800" r="2.200" fill="#a3c2dd"/><circle cx="12.700" cy="12.800" r="1" fill="#ffffff"/></svg>
<span class="t" style="left:234.5px;top:149px;letter-spacing:0.432px;">Shared PC Account Manager</span>
<span class="t" style="left:447.3px;top:149px;letter-spacing:0.416px;">Manage...</span>
<span class="t" style="left:600px;top:149px;">禁用</span>
<span class="t" style="left:727px;top:149px;">本地系统</span>
<svg class="a" style="left:216px;top:171px" width="17" height="17" viewBox="0 0 17 17"><circle cx="6.800" cy="7.100" r="5.900" fill="none" stroke="url(#gt)" stroke-width="2.300" stroke-dasharray="2.050 1.657" stroke-dashoffset="1.025"/><circle cx="6.800" cy="7.100" r="5.300" fill="url(#gg)"/><circle cx="6.800" cy="7.100" r="2.500" fill="#ffffff" stroke="#5f7388" stroke-width=".9"/><circle cx="12.700" cy="12.800" r="2.700" fill="none" stroke="#7fa1c2" stroke-width="1.500" stroke-dasharray="1.100 1.020"/><circle cx="12.700" cy="12.800" r="2.200" fill="#a3c2dd"/><circle cx="12.700" cy="12.800" r="1" fill="#ffffff"/></svg>
<span class="t" style="left:234.5px;top:170px;letter-spacing:0.440px;">Shell Hardware Detection</span>
<span class="t" style="left:447.3px;top:170px;letter-spacing:-0.219px;">为自动播...</span>
<span class="t" style="left:518px;top:170px;">正在运行</span>
<span class="t" style="left:600px;top:170px;">自动</span>
<span class="t" style="left:727px;top:170px;">本地系统</span>
<svg class="a" style="left:216px;top:192px" width="17" height="17" viewBox="0 0 17 17"><circle cx="6.800" cy="7.100" r="5.900" fill="none" stroke="url(#gt)" stroke-width="2.300" stroke-dasharray="2.050 1.657" stroke-dashoffset="1.025"/><circle cx="6.800" cy="7.100" r="5.300" fill="url(#gg)"/><circle cx="6.800" cy="7.100" r="2.500" fill="#ffffff" stroke="#5f7388" stroke-width=".9"/><circle cx="12.700" cy="12.800" r="2.700" fill="none" stroke="#7fa1c2" stroke-width="1.500" stroke-dasharray="1.100 1.020"/><circle cx="12.700" cy="12.800" r="2.200" fill="#a3c2dd"/><circle cx="12.700" cy="12.800" r="1" fill="#ffffff"/></svg>
<span class="t" style="left:234.5px;top:191px;letter-spacing:0.371px;">Smart Card</span>
<span class="t" style="left:447.3px;top:191px;letter-spacing:-0.219px;">管理此计...</span>
<span class="t" style="left:600px;top:191px;">手动(触发器启动)</span>
<span class="t" style="left:727px;top:191px;">本地服务</span>
<svg class="a" style="left:216px;top:213px" width="17" height="17" viewBox="0 0 17 17"><circle cx="6.800" cy="7.100" r="5.900" fill="none" stroke="url(#gt)" stroke-width="2.300" stroke-dasharray="2.050 1.657" stroke-dashoffset="1.025"/><circle cx="6.800" cy="7.100" r="5.300" fill="url(#gg)"/><circle cx="6.800" cy="7.100" r="2.500" fill="#ffffff" stroke="#5f7388" stroke-width=".9"/><circle cx="12.700" cy="12.800" r="2.700" fill="none" stroke="#7fa1c2" stroke-width="1.500" stroke-dasharray="1.100 1.020"/><circle cx="12.700" cy="12.800" r="2.200" fill="#a3c2dd"/><circle cx="12.700" cy="12.800" r="1" fill="#ffffff"/></svg>
<span class="t" style="left:234.5px;top:212px;letter-spacing:0.307px;">Smart Card Device Enumeration S...</span>
<span class="t" style="left:447.3px;top:212px;letter-spacing:-0.219px;">为给定会...</span>
<span class="t" style="left:600px;top:212px;">手动(触发器启动)</span>
<span class="t" style="left:727px;top:212px;">本地系统</span>
<svg class="a" style="left:216px;top:234px" width="17" height="17" viewBox="0 0 17 17"><circle cx="6.800" cy="7.100" r="5.900" fill="none" stroke="url(#gt)" stroke-width="2.300" stroke-dasharray="2.050 1.657" stroke-dashoffset="1.025"/><circle cx="6.800" cy="7.100" r="5.300" fill="url(#gg)"/><circle cx="6.800" cy="7.100" r="2.500" fill="#ffffff" stroke="#5f7388" stroke-width=".9"/><circle cx="12.700" cy="12.800" r="2.700" fill="none" stroke="#7fa1c2" stroke-width="1.500" stroke-dasharray="1.100 1.020"/><circle cx="12.700" cy="12.800" r="2.200" fill="#a3c2dd"/><circle cx="12.700" cy="12.800" r="1" fill="#ffffff"/></svg>
<span class="t" style="left:234.5px;top:233px;letter-spacing:0.372px;">Smart Card Removal Policy</span>
<span class="t" style="left:447.3px;top:233px;letter-spacing:-0.219px;">允许系统...</span>
<span class="t" style="left:600px;top:233px;">手动</span>
<span class="t" style="left:727px;top:233px;">本地系统</span>
<svg class="a" style="left:216px;top:255px" width="17" height="17" viewBox="0 0 17 17"><circle cx="6.800" cy="7.100" r="5.900" fill="none" stroke="url(#gt)" stroke-width="2.300" stroke-dasharray="2.050 1.657" stroke-dashoffset="1.025"/><circle cx="6.800" cy="7.100" r="5.300" fill="url(#gg)"/><circle cx="6.800" cy="7.100" r="2.500" fill="#ffffff" stroke="#5f7388" stroke-width=".9"/><circle cx="12.700" cy="12.800" r="2.700" fill="none" stroke="#7fa1c2" stroke-width="1.500" stroke-dasharray="1.100 1.020"/><circle cx="12.700" cy="12.800" r="2.200" fill="#a3c2dd"/><circle cx="12.700" cy="12.800" r="1" fill="#ffffff"/></svg>
<span class="t" style="left:234.5px;top:254px;letter-spacing:0.271px;">SmartByte Analytics Service</span>
<span class="t" style="left:447.3px;top:254px;letter-spacing:0.175px;">SmartBy...</span>
<span class="t" style="left:518px;top:254px;">正在运行</span>
<span class="t" style="left:600px;top:254px;">自动</span>
<span class="t" style="left:727px;top:254px;">本地系统</span>
<svg class="a" style="left:216px;top:276px" width="17" height="17" viewBox="0 0 17 17"><circle cx="6.800" cy="7.100" r="5.900" fill="none" stroke="url(#gt)" stroke-width="2.300" stroke-dasharray="2.050 1.657" stroke-dashoffset="1.025"/><circle cx="6.800" cy="7.100" r="5.300" fill="url(#gg)"/><circle cx="6.800" cy="7.100" r="2.500" fill="#ffffff" stroke="#5f7388" stroke-width=".9"/><circle cx="12.700" cy="12.800" r="2.700" fill="none" stroke="#7fa1c2" stroke-width="1.500" stroke-dasharray="1.100 1.020"/><circle cx="12.700" cy="12.800" r="2.200" fill="#a3c2dd"/><circle cx="12.700" cy="12.800" r="1" fill="#ffffff"/></svg>
<span class="t" style="left:234.5px;top:275px;letter-spacing:0.433px;">SmartByte Network Service</span>
<span class="t" style="left:518px;top:275px;">正在运行</span>
<span class="t" style="left:600px;top:275px;">自动</span>
<span class="t" style="left:727px;top:275px;">本地系统</span>
<svg class="a" style="left:216px;top:297px" width="17" height="17" viewBox="0 0 17 17"><circle cx="6.800" cy="7.100" r="5.900" fill="none" stroke="url(#gt)" stroke-width="2.300" stroke-dasharray="2.050 1.657" stroke-dashoffset="1.025"/><circle cx="6.800" cy="7.100" r="5.300" fill="url(#gg)"/><circle cx="6.800" cy="7.100" r="2.500" fill="#ffffff" stroke="#5f7388" stroke-width=".9"/><circle cx="12.700" cy="12.800" r="2.700" fill="none" stroke="#7fa1c2" stroke-width="1.500" stroke-dasharray="1.100 1.020"/><circle cx="12.700" cy="12.800" r="2.200" fill="#a3c2dd"/><circle cx="12.700" cy="12.800" r="1" fill="#ffffff"/></svg>
<span class="t" style="left:234.5px;top:296px;letter-spacing:0.201px;">SNMP 陷阱</span>
<span class="t" style="left:447.3px;top:296px;letter-spacing:-0.219px;">接收本地...</span>
<span class="t" style="left:600px;top:296px;">手动</span>
<span class="t" style="left:727px;top:296px;">本地服务</span>
<svg class="a" style="left:216px;top:318px" width="17" height="17" viewBox="0 0 17 17"><circle cx="6.800" cy="7.100" r="5.900" fill="none" stroke="url(#gt)" stroke-width="2.300" stroke-dasharray="2.050 1.657" stroke-dashoffset="1.025"/><circle cx="6.800" cy="7.100" r="5.300" fill="url(#gg)"/><circle cx="6.800" cy="7.100" r="2.500" fill="#ffffff" stroke="#5f7388" stroke-width=".9"/><circle cx="12.700" cy="12.800" r="2.700" fill="none" stroke="#7fa1c2" stroke-width="1.500" stroke-dasharray="1.100 1.020"/><circle cx="12.700" cy="12.800" r="2.200" fill="#a3c2dd"/><circle cx="12.700" cy="12.800" r="1" fill="#ffffff"/></svg>
<span class="t" style="left:234.5px;top:317px;letter-spacing:0.466px;">Software Protection</span>
<span class="t" style="left:447.3px;top:317px;letter-spacing:0.011px;">启用 Win...</span>
<span class="t" style="left:600px;top:317px;">自动(延迟启动，触发器启动)</span>
<span class="t" style="left:727px;top:317px;">网络服务</span>
<svg class="a" style="left:216px;top:339px" width="17" height="17" viewBox="0 0 17 17"><circle cx="6.800" cy="7.100" r="5.900" fill="none" stroke="url(#gt)" stroke-width="2.300" stroke-dasharray="2.050 1.657" stroke-dashoffset="1.025"/><circle cx="6.800" cy="7.100" r="5.300" fill="url(#gg)"/><circle cx="6.800" cy="7.100" r="2.500" fill="#ffffff" stroke="#5f7388" stroke-width=".9"/><circle cx="12.700" cy="12.800" r="2.700" fill="none" stroke="#7fa1c2" stroke-width="1.500" stroke-dasharray="1.100 1.020"/><circle cx="12.700" cy="12.800" r="2.200" fill="#a3c2dd"/><circle cx="12.700" cy="12.800" r="1" fill="#ffffff"/></svg>
<span class="t" style="left:234.5px;top:338px;letter-spacing:0.569px;">Spot Verifier</span>
<span class="t" style="left:447.3px;top:338px;letter-spacing:-0.219px;">验证潜在...</span>
<span class="t" style="left:600px;top:338px;">手动(触发器启动)</span>
<span class="t" style="left:727px;top:338px;">本地系统</span>
<svg class="a" style="left:216px;top:360px" width="17" height="17" viewBox="0 0 17 17"><circle cx="6.800" cy="7.100" r="5.900" fill="none" stroke="url(#gt)" stroke-width="2.300" stroke-dasharray="2.050 1.657" stroke-dashoffset="1.025"/><circle cx="6.800" cy="7.100" r="5.300" fill="url(#gg)"/><circle cx="6.800" cy="7.100" r="2.500" fill="#ffffff" stroke="#5f7388" stroke-width=".9"/><circle cx="12.700" cy="12.800" r="2.700" fill="none" stroke="#7fa1c2" stroke-width="1.500" stroke-dasharray="1.100 1.020"/><circle cx="12.700" cy="12.800" r="2.200" fill="#a3c2dd"/><circle cx="12.700" cy="12.800" r="1" fill="#ffffff"/></svg>
<span class="t" style="left:234.5px;top:359px;letter-spacing:0.070px;">SSDP Discovery</span>
<span class="t" style="left:447.3px;top:359px;letter-spacing:-0.219px;">当发现了...</span>
<span class="t" style="left:518px;top:359px;">正在运行</span>
<span class="t" style="left:600px;top:359px;">手动</span>
<span class="t" style="left:727px;top:359px;">本地服务</span>
<svg class="a" style="left:216px;top:381px" width="17" height="17" viewBox="0 0 17 17"><circle cx="6.800" cy="7.100" r="5.900" fill="none" stroke="url(#gt)" stroke-width="2.300" stroke-dasharray="2.050 1.657" stroke-dashoffset="1.025"/><circle cx="6.800" cy="7.100" r="5.300" fill="url(#gg)"/><circle cx="6.800" cy="7.100" r="2.500" fill="#ffffff" stroke="#5f7388" stroke-width=".9"/><circle cx="12.700" cy="12.800" r="2.700" fill="none" stroke="#7fa1c2" stroke-width="1.500" stroke-dasharray="1.100 1.020"/><circle cx="12.700" cy="12.800" r="2.200" fill="#a3c2dd"/><circle cx="12.700" cy="12.800" r="1" fill="#ffffff"/></svg>
<span class="t" style="left:234.5px;top:380px;letter-spacing:0.349px;">State Repository Service</span>
<span class="t" style="left:447.3px;top:380px;letter-spacing:-0.219px;">为应用程...</span>
<span class="t" style="left:518px;top:380px;">正在运行</span>
<span class="t" style="left:600px;top:380px;">手动</span>
<span class="t" style="left:727px;top:380px;">本地系统</span>
<svg class="a" style="left:216px;top:402px" width="17" height="17" viewBox="0 0 17 17"><circle cx="6.800" cy="7.100" r="5.900" fill="none" stroke="url(#gt)" stroke-width="2.300" stroke-dasharray="2.050 1.657" stroke-dashoffset="1.025"/><circle cx="6.800" cy="7.100" r="5.300" fill="url(#gg)"/><circle cx="6.800" cy="7.100" r="2.500" fill="#ffffff" stroke="#5f7388" stroke-width=".9"/><circle cx="12.700" cy="12.800" r="2.700" fill="none" stroke="#7fa1c2" stroke-width="1.500" stroke-dasharray="1.100 1.020"/><circle cx="12.700" cy="12.800" r="2.200" fill="#a3c2dd"/><circle cx="12.700" cy="12.800" r="1" fill="#ffffff"/></svg>
<span class="t" style="left:234.5px;top:401px;letter-spacing:0.371px;">Still Image Acquisition Events</span>
<span class="t" style="left:447.3px;top:401px;letter-spacing:-0.219px;">启动与静...</span>
<span class="t" style="left:600px;top:401px;">手动</span>
<span class="t" style="left:727px;top:401px;">本地系统</span>
</div>
<div class="a" style="left:1211px;top:212px;width:16px;height:436px;background:#f0f0f0"></div>
<div class="a" style="left:1211px;top:459px;width:15px;height:25px;background:#cdcdcd"></div>
<svg class="a" style="left:1210px;top:212px" width="17" height="436" viewBox="0 0 17 436" fill="none" stroke="#505050" stroke-width="2"><path d="M5.500 11l3.500-3.500 3.500 3.500"/><path d="M5.500 424l3.500 3.500 3.500-3.500"/></svg>
<div class="a" style="left:339px;top:647px;width:889px;height:1px;background:#828790"></div>
<svg class="a" style="left:339px;top:648px" width="90" height="21" viewBox="0 0 90 21" fill="none" stroke="#3c3c3c" stroke-width="1"><path d="M0.500 0.500l6 18.500h26.500l5.500-18.500z" fill="#fff" stroke="none"/><path d="M0.500 0.500l6 18.500h26.500l5.500-18.500"/><path d="M38.500 0.500l-3.200 10.500M36.500 12l2.500 7h30.500l5.500-18.500"/></svg>
<span class="t" style="left:346.7px;top:649px;">扩展</span>
<span class="t" style="left:383px;top:649px;">标准</span>
<div class="a" style="left:213px;top:669px;width:1015px;height:1px;background:#d7d7d7"></div>
<div class="a" style="left:213px;top:670px;width:1015px;height:20px;background:#f0f0f0"></div>
<div class="a" style="left:1008px;top:671px;width:1px;height:18px;background:#d7d7d7"></div>
<div class="a" style="left:1141px;top:671px;width:1px;height:18px;background:#d7d7d7"></div>
<div class="a" style="left:1226px;top:671px;width:1px;height:18px;background:#d7d7d7"></div>
<span class="t" style="left:214px;top:672px;letter-spacing:0.282px;">启动 本地计算机 上的服务 Sentinel LDK License Manager</span>
<div class="a" style="left:934px;top:347px;width:155px;height:231px;background:#f2f2f2;border:1px solid #a0a0a0;box-sizing:border-box;box-shadow:3px 3px 5px rgba(0,0,0,.42)"></div>
<div class="a" style="left:937px;top:349px;width:148.5px;height:20px;background:#91c9f7"></div>
<span class="t" style="left:968.8px;top:350px;color:#000;letter-spacing:-0.450px;">启动(S)</span>
<span class="t" style="left:968.8px;top:372px;color:#6d6d6d;letter-spacing:-0.032px;">停止(O)</span>
<span class="t" style="left:968.8px;top:394px;color:#6d6d6d;letter-spacing:-0.018px;">暂停(U)</span>
<span class="t" style="left:968.8px;top:416px;color:#6d6d6d;letter-spacing:0.325px;">恢复(M)</span>
<span class="t" style="left:968.8px;top:438px;color:#6d6d6d;letter-spacing:-0.300px;">重新启动(E)</span>
<span class="t" style="left:968.8px;top:467px;color:#000;">所有任务(K)</span>
<span class="t" style="left:968.8px;top:496px;color:#000;">刷新(F)</span>
<span class="t" style="left:968.8px;top:525px;font-weight:bold;color:#000;">属性(R)</span>
<span class="t" style="left:968.8px;top:554px;color:#000;">帮助(H)</span>
<div class="a" style="left:965px;top:462px;width:120px;height:1px;background:#d0d0d0"></div>
<div class="a" style="left:965px;top:491px;width:120px;height:1px;background:#d0d0d0"></div>
<div class="a" style="left:965px;top:520px;width:120px;height:1px;background:#d0d0d0"></div>
<div class="a" style="left:965px;top:549px;width:120px;height:1px;background:#d0d0d0"></div>
<svg class="a" style="left:1070px;top:471px" width="6" height="10" viewBox="0 0 6 10"><path d="M1 1l4 4-4 4" fill="none" stroke="#222" stroke-width="1.100"/></svg>
<div class="a" style="left:934.4px;top:346.5px;width:152.4px;height:24.3px;border:2px solid #f59a23;border-radius:3px;box-sizing:border-box"></div>
<div class="a" style="left:904.2px;top:345.5px;width:29px;height:29px;border-radius:50%;background:#f7941d"></div>
<span class="t" style="left:912.03px;top:346px;height:28px;line-height:28px;font-size:24px;color:#1a1a1a;">3</span>
</body></html>
